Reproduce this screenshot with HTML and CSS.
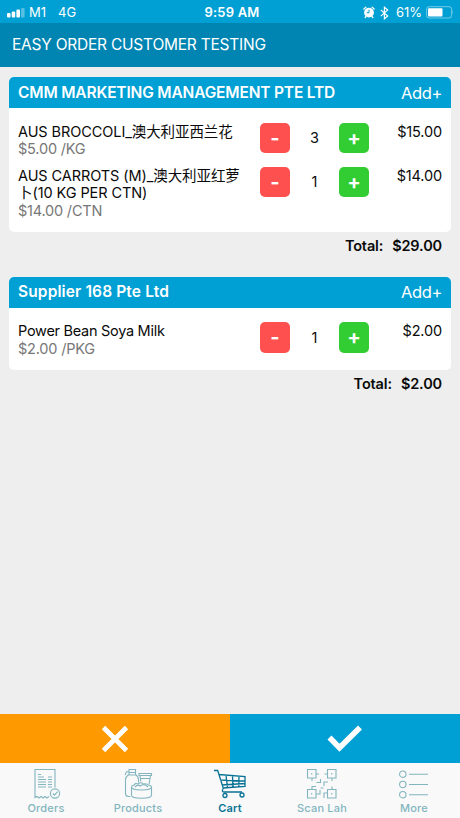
FILE: index.html
```html
<!DOCTYPE html>
<html lang="en">
<head>
<meta charset="utf-8">
<title>Cart</title>
<link rel="stylesheet" href="styles.css">
</head>
<body>
<div class="status">
  <div class="carrier">
    <svg width="18" height="10" viewBox="0 0 18 10" fill="#fff"><rect y="5" width="3.5" height="4.5" rx="1"/><rect x="4.7" y="3.5" width="3.5" height="6" rx="1"/><rect x="9.4" y="1.5" width="3.6" height="8" rx="1"/><rect x="14.1" width="3.5" height="9.5" rx="1" opacity=".35"/></svg>
    <span class="network"><span>M1</span><span>4G</span></span>
  </div>
  <div class="clock">9:59 AM</div>
  <div class="power">
    <svg width="12" height="13" viewBox="0 0 12 13"><path d="M.9 3 2.8 1.3M11.1 3 9.2 1.3M3 10.5l-.8 1M9 10.5l.8 1" stroke="#fff" stroke-width="1.3" stroke-linecap="round"/><circle cx="6" cy="6.6" r="4.9" fill="#fff"/><path d="M6 3.7v3H3.7" fill="none" stroke="#009fd4"/></svg>
    <svg class="bt" width="9" height="14" viewBox="0 0 9 14" fill="none" stroke="#fff" stroke-width="1.2"><path d="M.8 3.9 7.7 10 4.4 12.8V1.2L7.7 4 .8 10.1"/></svg>
    <span>61%</span>
    <svg class="battery" width="28" height="13" viewBox="0 0 28 13"><rect x=".6" y=".7" width="25" height="11.3" rx="2.5" fill="none" stroke="#fff" opacity=".45"/><rect x="2" y="2.2" width="14.5" height="8.3" rx="1" fill="#fff"/><path d="M26.5 4.3q1.5 2 0 4z" fill="#fff" opacity=".5"/></svg>
  </div>
</div>
<header class="title">EASY ORDER CUSTOMER TESTING</header>
<main>
  <section class="card">
    <div class="card-head"><h2>CMM MARKETING MANAGEMENT PTE LTD</h2><span class="add">Add+</span></div>
    <div class="items">
      <div class="item">
        <div class="name"><div>AUS BROCCOLI_澳大利亚西兰花</div><div class="unit">$5.00 /KG</div></div>
        <div class="stepper"><button class="minus">-</button><span>3</span><button class="plus">+</button></div>
        <div class="price">$15.00</div>
      </div>
      <div class="item">
        <div class="name"><div>AUS CARROTS (M)_澳大利亚红萝<br>卜(10 KG PER CTN)</div><div class="unit">$14.00 /CTN</div></div>
        <div class="stepper"><button class="minus">-</button><span>1</span><button class="plus">+</button></div>
        <div class="price">$14.00</div>
      </div>
    </div>
  </section>
  <div class="total"><span>Total:</span><span>$29.00</span></div>
  <section class="card">
    <div class="card-head"><h2 class="mixed">Supplier 168 Pte Ltd</h2><span class="add">Add+</span></div>
    <div class="items">
      <div class="item">
        <div class="name"><div class="latin">Power Bean Soya Milk</div><div class="unit">$2.00 /PKG</div></div>
        <div class="stepper"><button class="minus">-</button><span>1</span><button class="plus">+</button></div>
        <div class="price">$2.00</div>
      </div>
    </div>
  </section>
  <div class="total"><span>Total:</span><span>$2.00</span></div>
</main>
<div class="actions">
  <button class="cancel" aria-label="Cancel"><svg width="28" height="28" viewBox="0 0 28 28"><path d="m2.5 2.5 23 23m0-23-23 23" stroke="#fff" stroke-width="4.8"/></svg></button>
  <button class="confirm" aria-label="Confirm"><svg width="36" height="28" viewBox="0 0 36 28"><path d="m2.5 12.5 10 10.2L33 2.5" fill="none" stroke="#fff" stroke-width="5.6"/></svg></button>
</div>
<nav>
  <a><svg viewBox="0 0 32 32"><path d="M19 28.5l-2 1.5-2-1.5-2 1.5-2-1.5L9 30l-2-1.5L5 29.5V1.5h20v18M8 6.5h3M8 9h6M8 11.5h8M8 14h8M8 16.5h8M8 19h8M18 9h4M18 11.5h4M18 14h4M18 16.5h4M18 19h4"/><circle cx="25" cy="25.5" r="4.6"/><path d="m22.8 25.5 1.7 1.7 3-3.5"/></svg><span>Orders</span></a>
  <a><svg viewBox="0 0 32 32"><path d="M7 4.5V1.5h6.5v3zM7 4.5v2q-3.5 2-3.500 5V25.5q0 3 3 3h2M13.5 4.5v2q3 2 3 5v3M7 7h6.5M7 3.8H4.5L3 7M17 5.5h12.500v2H17zM18 7.500l.8 6M28.500 7.500l-1.400 8.500M18.300 10.500h9.800M9.500 19v8q0 3.300 10 3.300t10-3.300v-8"/><path d="M12 17q-2.500.700-2.500 2 0 3 10 3t10-3q0-1.300-2.500-2M12 17.500q1-3 4-1.500 3-2.500 5 0 4-1 6 1.500M13 19q3-3 5-1 4-3 8 1"/></svg><span>Products</span></a>
  <a class="active"><svg viewBox="0 0 32 32"><path d="M0 2.5h3.700L9.500 21M5 6.500 31 8.500V18.500L9 20M6.200 12 31 13M7.700 17l23.300-1.500M12 7l1.500 12.700M18.500 7.500l.5 11.800M25 8l-.2 11M9.500 20q-2.500 4 .5 4h18"/><circle cx="11" cy="27.500" r="2"/><circle cx="28" cy="27" r="2"/></svg><span>Cart</span></a>
  <a><svg viewBox="0 0 32 32"><path d="M1.5 1.5h8.500v8.500H1.500zM21.500 1.5H30v8.500h-8.500zM1.500 21.500H10V30H1.500zM21.500 21.500H30V30h-8.500zM10 6h3M18.500 6h3M6 10v3M26 10v3M10 26h4v-4M6 21.500v-3h4M18 30v-5h3.500M26 21.500v-3M10.500 14.500h4V11M18 18v-4h4M14.500 20h3M5.700 5v1.500M25.700 5v1.500M5.700 25v1.500M25.700 25v1.500"/></svg><span>Scan Lah</span></a>
  <a><svg viewBox="0 0 32 32"><circle cx="4.8" cy="6.2" r="3.2"/><circle cx="4.8" cy="16.5" r="3.2"/><circle cx="4.8" cy="26.7" r="3.2"/><path d="M11 6.2h19M11 16.5h19M11 26.7h19"/></svg><span>More</span></a>
</nav>
</body>
</html>
```
FILE: styles.css
```css
* { box-sizing: border-box; }
body { margin: 0; height: 818px; display: flex; flex-direction: column; background: #eee; color: #0a0a0a; font: 14.5px/17.5px Inter, "Noto Sans CJK SC", sans-serif; overflow: hidden; }
svg { display: block; flex: none; }
button { border: 0; padding: 0; font-family: inherit; color: #fff; }
.status { height: 23px; display: grid; grid-template-columns: 1fr 1fr 1fr; align-items: center; padding: 2px 6px 0 7px; background: #009fd4; color: #fff; font-size: 13px; }
.carrier, .power { display: flex; align-items: center; }
.carrier { gap: 4px; }
.network { display: flex; gap: 12px; }
.clock { text-align: center; font-weight: 600; padding-left: 3px; letter-spacing: .2px; }
.power { justify-content: flex-end; }
.bt { margin: 0 7px 0 5px; }
.battery { margin-left: 4px; }
.title { height: 44px; display: flex; align-items: center; padding: 0 12px; background: #0085b2; color: #fff; font-size: 15.5px; letter-spacing: -.23px; }
main { flex: 1; padding: 10px 9px 0; }
.card { border-radius: 5px; overflow: hidden; background: #fff; }
.card-head { height: 31px; padding: 0 9px; display: flex; justify-content: space-between; align-items: center; background: #009fd4; color: #fff; }
h2 { margin: 0; font-size: 15.5px; font-weight: 600; letter-spacing: -.17px; }
.mixed { letter-spacing: .13px; }
.add { font-size: 16.5px; padding-top: 2px; letter-spacing: -.4px; }
.items { padding: 14.5px 9px 12.5px; display: flex; flex-direction: column; gap: 9px; }
.item { display: grid; grid-template-columns: 242px 109px 1fr; align-items: start; }
.name { white-space: nowrap; letter-spacing: -.08px; }
.latin { letter-spacing: -.28px; }
.unit { color: #777; letter-spacing: -.2px; }
.stepper { display: flex; justify-content: space-between; align-items: center; }
.stepper button { width: 30px; height: 30.5px; border-radius: 5px; font-size: 20px; font-weight: 700; line-height: 31px; }
.minus { background: #ff5050; }
.plus { background: #32cd32; }
.price { text-align: right; letter-spacing: -.15px; }
.total { height: 45px; padding: 5.5px 9px 0; display: flex; justify-content: flex-end; gap: 9px; font-weight: 600; letter-spacing: -.15px; }
.actions { height: 49px; display: grid; grid-template-columns: 1fr 1fr; }
.actions button { display: flex; justify-content: center; align-items: center; }
.cancel { background: #ff9900; }
.confirm { background: #009fd4; }
nav { height: 55px; display: grid; grid-template-columns: repeat(5, 1fr); background: #f9f9f9; color: #83b5bf; font-size: 11px; font-weight: 500; line-height: 13px; letter-spacing: .2px; }
nav a { display: flex; flex-direction: column; align-items: center; padding-top: 5px; gap: 2px; }
nav svg { width: 32px; height: 32px; fill: none; stroke: currentColor; stroke-width: 1.1; }
.active { color: #087294; font-weight: 600; }
.active svg { stroke-width: 1.3; }
```
